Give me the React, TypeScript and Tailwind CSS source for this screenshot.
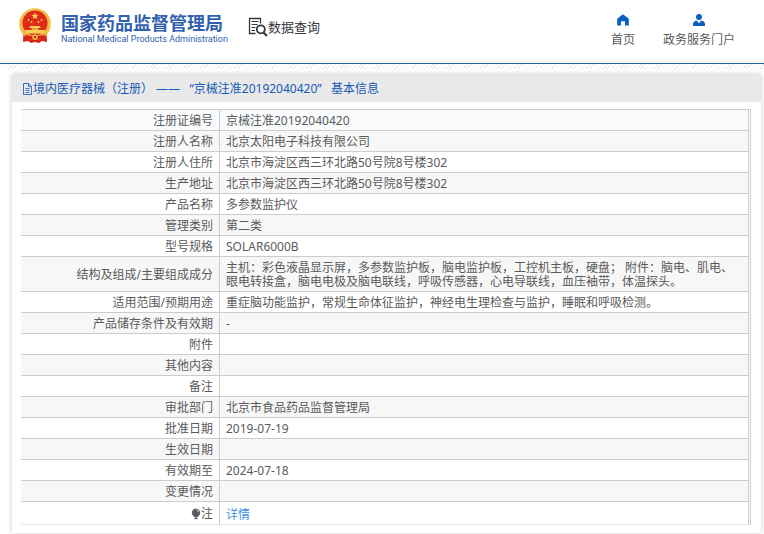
import React from "react";

type Row = { label: string; value: string };

const rows: Row[] = [
  { label: "注册证编号", value: "京械注准20192040420" },
  { label: "注册人名称", value: "北京太阳电子科技有限公司" },
  { label: "注册人住所", value: "北京市海淀区西三环北路50号院8号楼302" },
  { label: "生产地址", value: "北京市海淀区西三环北路50号院8号楼302" },
  { label: "产品名称", value: "多参数监护仪" },
  { label: "管理类别", value: "第二类" },
  { label: "型号规格", value: "SOLAR6000B" },
  {
    label: "结构及组成/主要组成成分",
    value:
      "主机：彩色液晶显示屏，多参数监护板，脑电监护板，工控机主板，硬盘； 附件：脑电、肌电、眼电转接盒，脑电电极及脑电联线，呼吸传感器，心电导联线，血压袖带，体温探头。",
  },
  {
    label: "适用范围/预期用途",
    value: "重症脑功能监护，常规生命体征监护，神经电生理检查与监护，睡眠和呼吸检测。",
  },
  { label: "产品储存条件及有效期", value: "-" },
  { label: "附件", value: "" },
  { label: "其他内容", value: "" },
  { label: "备注", value: "" },
  { label: "审批部门", value: "北京市食品药品监督管理局" },
  { label: "批准日期", value: "2019-07-19" },
  { label: "生效日期", value: "" },
  { label: "有效期至", value: "2024-07-18" },
  { label: "变更情况", value: "" },
];

function Emblem() {
  return (
    <svg viewBox="0 0 32 36" className="h-9 w-8 shrink-0" aria-hidden="true">
      <path d="M4.500 24 L4 34 L9 33 L12 35 L16 34 L20 35 L23 33 L28 34 L27.500 24 Z" fill="#d8261c" />
      <circle cx="16" cy="16" r="15.800" fill="#efb73e" />
      <circle cx="16" cy="16" r="14.500" fill="none" stroke="#f8d668" strokeWidth="1" strokeDasharray="2 1.500" />
      <circle cx="16" cy="15" r="12.500" fill="#dd2a1b" />
      <path d="M16 4.500l1 2.300 2.500.2-1.900 1.600.6 2.400-2.200-1.300-2.200 1.300.6-2.400-1.900-1.600 2.500-.2z" fill="#f7d154" />
      <g fill="#f7d154">
        <circle cx="9.500" cy="12" r="0.900" />
        <circle cx="12.500" cy="14" r="0.900" />
        <circle cx="19.500" cy="14" r="0.900" />
        <circle cx="22.500" cy="12" r="0.900" />
        <path d="M11.500 18h9l1.500 2h-12z" />
        <path d="M12.500 20.300h7v1.400h-7z" />
        <path d="M6 22h20l-1.500 3.500h-17z" />
      </g>
      <path d="M6 26.500q10 3 20 0l-1.500 4q-8.500 2-17 0z" fill="#d8261c" />
      <circle cx="16" cy="29" r="2.800" fill="#f1c04a" />
      <circle cx="16" cy="29" r="1.200" fill="#d8261c" />
    </svg>
  );
}

function SearchDocument() {
  return (
    <svg viewBox="0 0 20 20" className="h-5 w-5 shrink-0" fill="none" stroke="#35383c" aria-hidden="true">
      <path d="M12.500 6.500V1.500H1.500V16.500H7.500" strokeWidth="1.300" />
      <path d="M3.500 4.500h7M3.500 7.500h6M3.500 10.500h4M3.500 13.500h3.500" strokeWidth="1.200" />
      <circle cx="12.800" cy="12.300" r="4" strokeWidth="1.800" />
      <path d="M15.500 15.500l3.500 3.500" strokeWidth="2.200" />
    </svg>
  );
}

function PageIcon() {
  return (
    <svg viewBox="0 0 11 12" className="h-3 w-[11px] shrink-0" fill="none" stroke="#3a72c4" aria-hidden="true">
      <path d="M1.500 0.500H6.500L9.500 3.500V11.500H1.500Z" />
      <path d="M6.500 0.500V3.500H9.500M3.500 5.500H7.500M3.500 7.500H7.500M3.500 9.500H7.500" />
    </svg>
  );
}

function HomeIcon() {
  return (
    <svg viewBox="0 0 12 12" className="size-3" fill="#0b5fc0" aria-hidden="true">
      <path d="M6 0.300L0.200 4.800V11.500H4V7.300H8V11.500H11.800V4.800Z" />
    </svg>
  );
}

function UserIcon() {
  return (
    <svg viewBox="0 0 12 12" className="size-3" fill="#0b5fc0" aria-hidden="true">
      <circle cx="6" cy="3" r="3" />
      <path d="M0 12V10Q0.300 7.200 3.700 6.600L6 9.300L8.300 6.600Q11.700 7.200 12 10V12Z" />
    </svg>
  );
}

function BulbIcon() {
  return (
    <svg viewBox="0 0 10 12" className="h-3 w-2.5" aria-hidden="true">
      <path d="M5 0.500a4.200 4.200 0 0 0-2.400 7.600L3.500 9.500h3l.9-1.400A4.200 4.200 0 0 0 5 .5z" fill="#5a5d60" />
      <path d="M3.500 10h3v1.200h-3z" fill="#5a5d60" />
      <path d="M5.500 1.700a3 3 0 0 1 2.300 2.400" stroke="#fff" strokeWidth="0.800" fill="none" />
    </svg>
  );
}

export default function App() {
  return (
    <div className="bg-white pb-2 font-['Noto_Sans','Noto_Sans_CJK_SC',sans-serif] text-xs text-[#5a5a5a]">
      <header className="flex h-16 items-start justify-between border-b border-b-[#1f6499] pr-[29px] pl-[19px]">
        <div className="flex items-start">
          <a href="#home" className="flex items-start gap-2.5 pt-2">
            <Emblem />
            <span className="flex w-[163px] flex-col pt-1 text-[#3161ad]">
              <span className="font-['Noto_Sans_CJK_SC',sans-serif] text-lg leading-5 font-bold">国家药品监督管理局</span>
              <span className="font-['Roboto',sans-serif] text-[9px] leading-[14px] whitespace-nowrap">
                National Medical Products Administration
              </span>
            </span>
          </a>
          <h1 className="flex items-center pt-[17px] pl-6 font-['Noto_Sans_CJK_SC',sans-serif] text-[13px] leading-5 text-[#35383c]">
            <SearchDocument />
            数据查询
          </h1>
        </div>
        <nav className="flex gap-7 pt-3.5">
          <a href="#index" className="flex flex-col items-center gap-1">
            <HomeIcon />
            <span className="leading-5">首页</span>
          </a>
          <a href="#portal" className="flex flex-col items-center gap-1">
            <UserIcon />
            <span className="leading-5">政务服务门户</span>
          </a>
        </nav>
      </header>
      <div className="h-[5px] bg-[repeating-linear-gradient(135deg,#ececec_0_1px,#fff_1px_3px)]" />

      <main className="mt-[5px] mr-[3px] ml-3 bg-white pb-2 shadow-[0_0_5px_rgba(0,0,0,0.2)]">
        <h2 className="flex h-7 items-center bg-[#e9e9e9] pt-0.5 pl-2.5 text-[#1659b5]">
          <PageIcon />
          <span className="whitespace-pre">境内医疗器械（注册） ——   “京械注准20192040420”   基本信息</span>
        </h2>
        <div className="mt-[7px] mr-2.5 ml-[9px] border-r-3 border-double border-[#ccc]">
          <table className="w-full table-fixed border-separate border-spacing-0 leading-[14px]">
            <colgroup>
              <col className="w-[199px]" />
              <col />
            </colgroup>
            <tbody>
              {rows.map((row, i) => (
                <tr key={row.label} className={i === 0 ? "bg-[#f8fafc]" : i % 2 ? "bg-[#f7f7f7]" : "bg-white"}>
                  <th scope="row" className="border-t border-r border-[#ccc] px-1.5 pt-1 pb-0.5 text-right font-normal">
                    {row.label}
                  </th>
                  <td className="border-t border-[#ccc] px-1.5 pt-1 pb-0.5">{row.value}</td>
                </tr>
              ))}
              <tr>
                <th scope="row" className="border-t border-r border-b border-[#ccc] border-b-[#e8e8e8] px-1.5 pt-[5px] pb-[3px] text-right font-normal">
                  <span className="flex items-center justify-end">
                    <BulbIcon />注
                  </span>
                </th>
                <td className="border-t border-b border-[#ccc] border-b-[#e8e8e8] px-1.5 pt-1.5 pb-0.5">
                  <a href="#detail" className="text-[#3e8ede]">详情</a>
                </td>
              </tr>
            </tbody>
          </table>
        </div>
      </main>
    </div>
  );
}
